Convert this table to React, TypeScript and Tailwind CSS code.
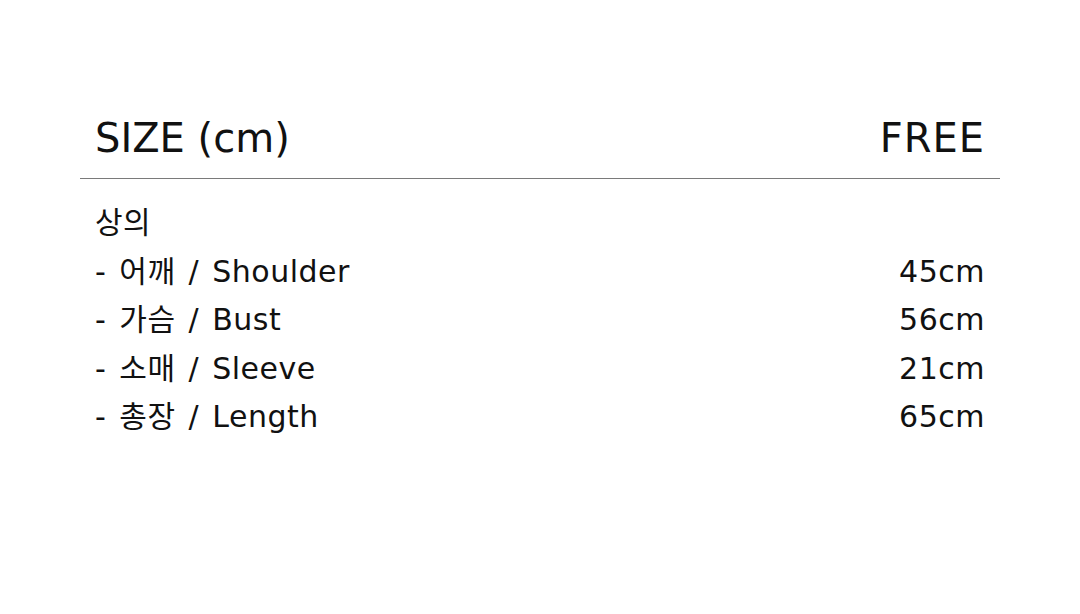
import React from "react";

const rows = [
  { label: "- 어깨 / Shoulder", value: "45cm" },
  { label: "- 가슴 / Bust", value: "56cm" },
  { label: "- 소매 / Sleeve", value: "21cm" },
  { label: "- 총장 / Length", value: "65cm" },
];

export default function App() {
  return (
    <div
      className="w-[1080px] h-[614px] bg-white text-[#111]"
      style={{ fontFamily: '"DejaVu Sans", "Noto Sans CJK KR", sans-serif' }}
    >
      <div className="pt-[114px] px-[80px]">
        <div className="flex justify-between items-center h-[48px] px-[15px] text-[40px] leading-[48px]">
          <span>SIZE (cm)</span>
          <span className="tracking-[1px]">FREE</span>
        </div>
        <div className="mt-[16px] h-px bg-[#7a7a7a]" />
        <div className="pt-[20px] px-[15px] text-[30px] leading-[48.5px] tracking-[0.5px] [word-spacing:3px]">
          <div>상의</div>
          {rows.map((r) => (
            <div key={r.label} className="flex justify-between">
              <span>{r.label}</span>
              <span>{r.value}</span>
            </div>
          ))}
        </div>
      </div>
    </div>
  );
}
